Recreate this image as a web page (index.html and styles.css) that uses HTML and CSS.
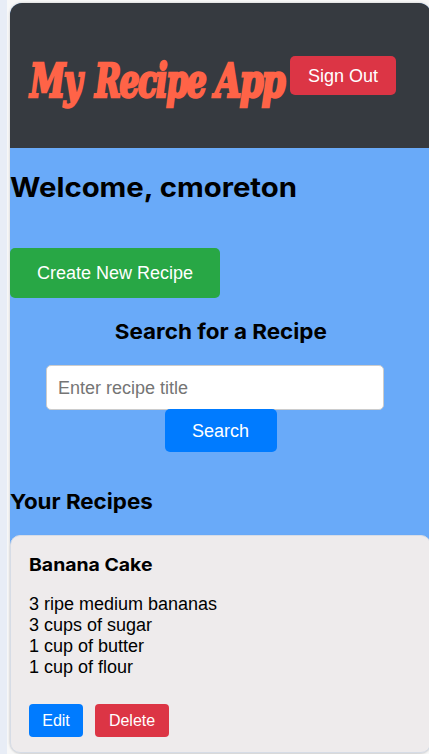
FILE: index.html
```html
<!DOCTYPE html>
<html lang="en">
<head>
<meta charset="utf-8">
<title>My Recipe App</title>
<link rel="stylesheet" href="styles.css">
</head>
<body>
<div class="app">
  <header class="header">
    <h1 class="brand"><span class="word my">My</span><span class="word recipe">Recipe</span><span class="word name">App</span></h1>
    <button class="btn sign-out">Sign Out</button>
  </header>
  <main class="main">
    <h2 class="welcome">Welcome, cmoreton</h2>
    <button class="btn create">Create New Recipe</button>
    <section class="search">
      <h3 class="search-title">Search for a Recipe</h3>
      <input class="field" type="text" placeholder="Enter recipe title">
      <button class="btn find">Search</button>
    </section>
    <h3 class="list-title">Your Recipes</h3>
    <article class="card">
      <h4 class="card-title">Banana Cake</h4>
      <p class="ingredients">3 ripe medium bananas<br>3 cups of sugar<br>1 cup of butter<br>1 cup of flour</p>
      <div class="actions">
        <button class="btn edit">Edit</button>
        <button class="btn delete">Delete</button>
      </div>
    </article>
  </main>
</div>
</body>
</html>
```
FILE: styles.css
```css
* { box-sizing: border-box; margin: 0; }
html { background: #f8f8f8; overflow: hidden; }
body {
  height: 754px;
  padding: 3px 0 0 3px;
  overflow: hidden;
  border-left: 7px solid #e8edf6;
  font: 18px/21px "Liberation Sans", Arial, sans-serif;
  color: #000;
}
.app {
  width: 421px;
  border-radius: 12px;
  background: linear-gradient(#69aaf9 545px, #f8f8f8 545px);
  box-shadow: 0 0 3px rgba(0, 0, 0, .2);
}
.header {
  display: flex;
  align-items: flex-start;
  height: 145px;
  padding: 53px 0 0 20px;
  border-radius: 12px 12px 0 0;
  background: #363a40;
}
.brand {
  display: flex;
  width: 261px;
  height: 50px;
  color: #ff6347;
  font: italic bold 46px/50px "DejaVu Serif", serif;
  font-stretch: condensed;
  -webkit-text-stroke: 2.6px #ff6347;
}
.word { flex: none; transform-origin: 0 50%; white-space: nowrap; letter-spacing: -2px; }
.my { width: 65px; transform: scaleX(.77); }
.recipe { width: 120px; transform: scaleX(.76); }
.name { width: 73px; transform: scaleX(.82); }
.btn {
  display: block;
  padding: 0;
  border: 0;
  border-radius: 5px;
  color: #fff;
  font: 18px/21px "Liberation Sans", Arial, sans-serif;
}
.sign-out { width: 106px; height: 39px; padding-top: 1px; margin-left: -1px; background: #dc3545; }
.main { display: flex; flex-direction: column; align-items: flex-start; }
h2, h3, h4 {
  font-family: Inter, sans-serif;
  font-weight: 700;
  white-space: nowrap;
  transform-origin: 0 50%;
}
.welcome { margin-top: 23px; font-size: 27px; line-height: 34px; transform: scaleX(1.086); }
.create { width: 210px; height: 50px; margin-top: 43px; background: #28a745; }
.search { display: flex; flex-direction: column; align-items: center; width: 421px; margin-top: 20px; }
.search-title { font-size: 20.5px; line-height: 27px; transform: scaleX(1.095); transform-origin: 50% 50%; }
.field {
  width: 338px;
  height: 45px;
  margin: 20px 11px 0 0;
  padding: 1px 11px 0;
  border: 1px solid #ccc;
  border-radius: 5px;
  background: #fff;
  font: 18px "Liberation Sans", Arial, sans-serif;
}
.field::placeholder { color: #757575; }
.find { width: 112px; height: 43px; padding-top: 1px; margin-top: -1px; background: #007bff; }
.list-title { margin-top: 36px; font-size: 20.5px; line-height: 27px; transform: scaleX(1.09); }
.card {
  width: 421px;
  height: 218px;
  margin-top: 20px;
  padding: 17px 18px;
  border: 1px solid #d6dce6;
  border-radius: 10px;
  background: #eeebec;
  box-shadow: 0 1px 2px rgba(0, 0, 0, .08);
}
.card-title { font-size: 17.5px; line-height: 23px; transform: scaleX(1.11); }
.ingredients { margin-top: 18px; }
.actions { display: flex; gap: 12px; margin-top: 26px; }
.edit, .delete { height: 33px; font-size: 16px; border-radius: 4px; }
.edit { width: 54px; background: #007bff; }
.delete { width: 74px; background: #dc3545; }
```
